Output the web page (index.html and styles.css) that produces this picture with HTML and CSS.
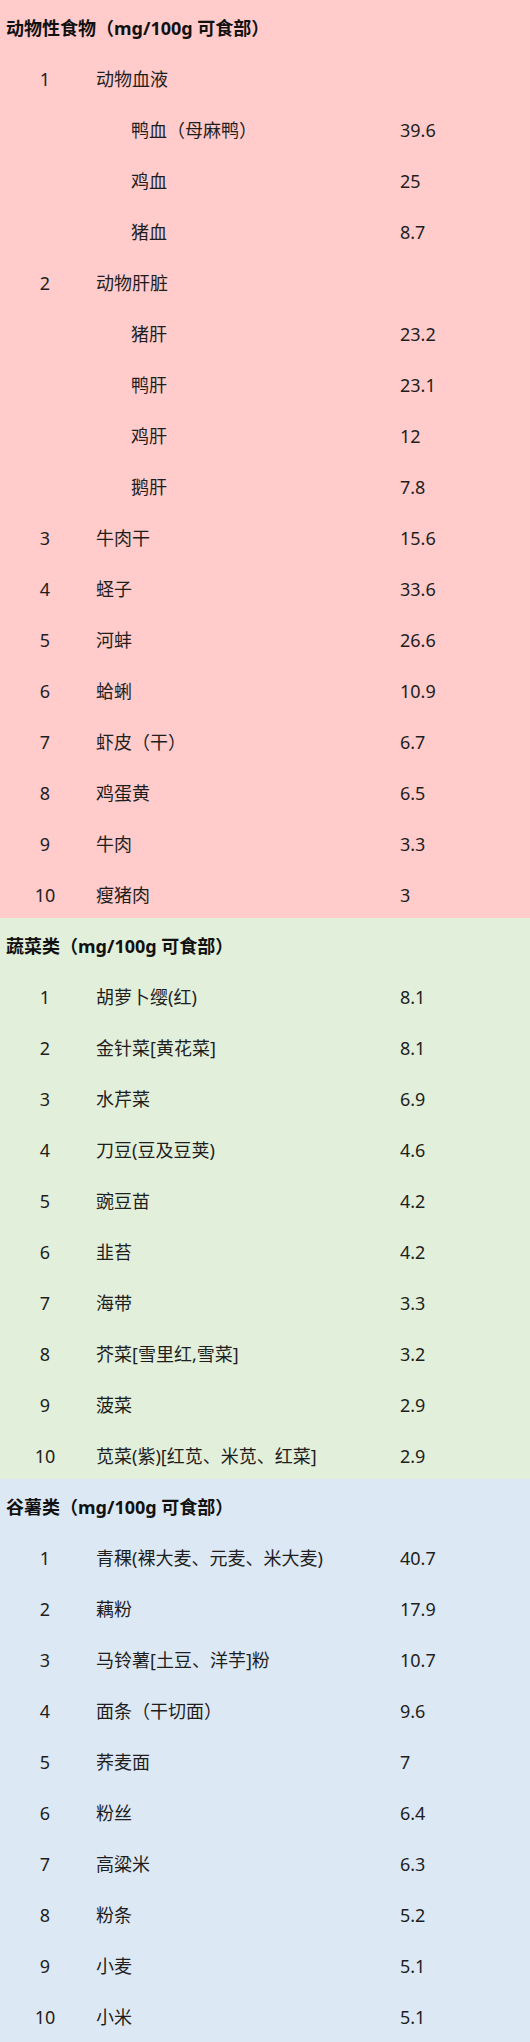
FILE: index.html
```html
<!DOCTYPE html>
<html lang="zh-CN">
<head>
<meta charset="utf-8">
<title>含铁食物</title>
<link rel="stylesheet" href="styles.css">
</head>
<body>
<section class="block pink">
  <div class="title">动物性食物（mg/100g 可食部）</div>
  <div class="row"><span class="num">1</span><span class="name">动物血液</span><span class="val"></span></div>
  <div class="row"><span class="num"></span><span class="name sub">鸭血（母麻鸭）</span><span class="val">39.6</span></div>
  <div class="row"><span class="num"></span><span class="name sub">鸡血</span><span class="val">25</span></div>
  <div class="row"><span class="num"></span><span class="name sub">猪血</span><span class="val">8.7</span></div>
  <div class="row"><span class="num">2</span><span class="name">动物肝脏</span><span class="val"></span></div>
  <div class="row"><span class="num"></span><span class="name sub">猪肝</span><span class="val">23.2</span></div>
  <div class="row"><span class="num"></span><span class="name sub">鸭肝</span><span class="val">23.1</span></div>
  <div class="row"><span class="num"></span><span class="name sub">鸡肝</span><span class="val">12</span></div>
  <div class="row"><span class="num"></span><span class="name sub">鹅肝</span><span class="val">7.8</span></div>
  <div class="row"><span class="num">3</span><span class="name">牛肉干</span><span class="val">15.6</span></div>
  <div class="row"><span class="num">4</span><span class="name">蛏子</span><span class="val">33.6</span></div>
  <div class="row"><span class="num">5</span><span class="name">河蚌</span><span class="val">26.6</span></div>
  <div class="row"><span class="num">6</span><span class="name">蛤蜊</span><span class="val">10.9</span></div>
  <div class="row"><span class="num">7</span><span class="name">虾皮（干）</span><span class="val">6.7</span></div>
  <div class="row"><span class="num">8</span><span class="name">鸡蛋黄</span><span class="val">6.5</span></div>
  <div class="row"><span class="num">9</span><span class="name">牛肉</span><span class="val">3.3</span></div>
  <div class="row"><span class="num">10</span><span class="name">瘦猪肉</span><span class="val">3</span></div>
</section>
<section class="block green">
  <div class="title">蔬菜类（mg/100g 可食部）</div>
  <div class="row"><span class="num">1</span><span class="name">胡萝卜缨(红)</span><span class="val">8.1</span></div>
  <div class="row"><span class="num">2</span><span class="name">金针菜[黄花菜]</span><span class="val">8.1</span></div>
  <div class="row"><span class="num">3</span><span class="name">水芹菜</span><span class="val">6.9</span></div>
  <div class="row"><span class="num">4</span><span class="name">刀豆(豆及豆荚)</span><span class="val">4.6</span></div>
  <div class="row"><span class="num">5</span><span class="name">豌豆苗</span><span class="val">4.2</span></div>
  <div class="row"><span class="num">6</span><span class="name">韭苔</span><span class="val">4.2</span></div>
  <div class="row"><span class="num">7</span><span class="name">海带</span><span class="val">3.3</span></div>
  <div class="row"><span class="num">8</span><span class="name">芥菜[雪里红,雪菜]</span><span class="val">3.2</span></div>
  <div class="row"><span class="num">9</span><span class="name">菠菜</span><span class="val">2.9</span></div>
  <div class="row"><span class="num">10</span><span class="name">苋菜(紫)[红苋、米苋、红菜]</span><span class="val">2.9</span></div>
</section>
<section class="block blue">
  <div class="title">谷薯类（mg/100g 可食部）</div>
  <div class="row"><span class="num">1</span><span class="name">青稞(裸大麦、元麦、米大麦)</span><span class="val">40.7</span></div>
  <div class="row"><span class="num">2</span><span class="name">藕粉</span><span class="val">17.9</span></div>
  <div class="row"><span class="num">3</span><span class="name">马铃薯[土豆、洋芋]粉</span><span class="val">10.7</span></div>
  <div class="row"><span class="num">4</span><span class="name">面条（干切面）</span><span class="val">9.6</span></div>
  <div class="row"><span class="num">5</span><span class="name">荞麦面</span><span class="val">7</span></div>
  <div class="row"><span class="num">6</span><span class="name">粉丝</span><span class="val">6.4</span></div>
  <div class="row"><span class="num">7</span><span class="name">高粱米</span><span class="val">6.3</span></div>
  <div class="row"><span class="num">8</span><span class="name">粉条</span><span class="val">5.2</span></div>
  <div class="row"><span class="num">9</span><span class="name">小麦</span><span class="val">5.1</span></div>
  <div class="row"><span class="num">10</span><span class="name">小米</span><span class="val">5.1</span></div>
</section>
</body>
</html>
```
FILE: styles.css
```css
html {
  background: #dde8f5;
}
body {
  margin: 0;
  font-family: "Noto Sans", "Noto Sans CJK SC", sans-serif;
  font-size: 18px;
  color: #1e1e1e;
}
.block {
  display: flex;
  flex-direction: column;
}
.pink { background: #ffcbcb; }
.green { background: #e2efda; }
.blue { background: #dde8f5; }
.title {
  height: 51px;
  box-sizing: border-box;
  padding: 6px 0 0 6px;
  line-height: 45px;
  font-weight: 700;
  color: #111;
  white-space: nowrap;
}
.row {
  display: grid;
  grid-template-columns: 90px 310px 130px;
  height: 51px;
  box-sizing: border-box;
  padding-top: 6px;
  line-height: 45px;
  white-space: nowrap;
}
.num {
  text-align: center;
}
.name {
  padding-left: 6px;
}
.name.sub {
  padding-left: 41px;
}
.val {
  padding-left: 0;
}
```
